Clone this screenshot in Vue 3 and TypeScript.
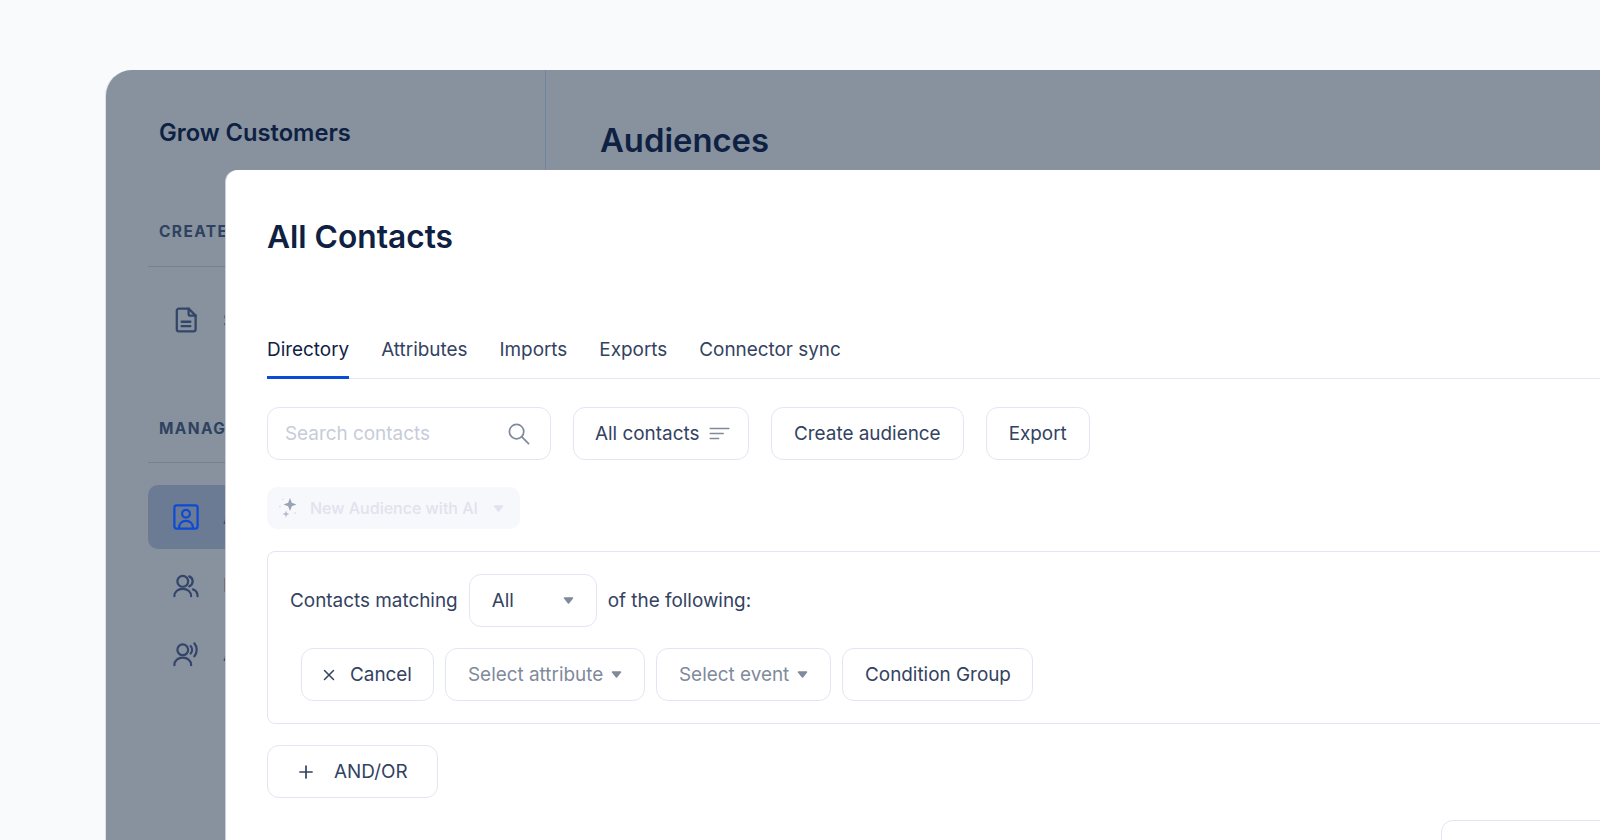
<template>
  <div class="page">
    <div class="window">
      <aside class="sidebar">
        <div class="brand">Grow Customers</div>

        <div class="section-title first">CREATE</div>
        <nav class="nav">
          <div v-for="item in createItems" :key="item.label" class="nav-item">
            <svg class="nav-icon" viewBox="0 0 28 32" fill="none" stroke="currentColor" stroke-width="2.600" stroke-linecap="round" stroke-linejoin="round">
              <path d="M6 3h11l8 8v15.500a2.500 2.500 0 0 1-2.500 2.500h-16.500a2.500 2.500 0 0 1-2.500-2.500v-21a2.500 2.500 0 0 1 2.500-2.500z" />
              <path d="M17 3v6a2 2 0 0 0 2 2h6" />
              <path d="M9 18h10M9 23h10" />
            </svg>
            <span class="nav-label">{{ item.label }}</span>
          </div>
        </nav>

        <div class="section-title second">MANAGE</div>
        <nav class="nav second-nav">
          <div class="nav-item active">
            <svg class="nav-icon" viewBox="0 0 28 28" fill="none" stroke="currentColor" stroke-width="2.400" stroke-linecap="round" stroke-linejoin="round">
              <rect x="1.500" y="1.500" width="25" height="25" rx="2.500" />
              <circle cx="14" cy="10.500" r="4.200" />
              <path d="M6.500 26c0-5 3.200-7.800 7.500-7.800s7.500 2.800 7.500 7.800" />
            </svg>
            <span class="nav-label">Audiences</span>
          </div>
          <div class="nav-item">
            <svg class="nav-icon" viewBox="0 0 28 26" fill="none" stroke="currentColor" stroke-width="2.400" stroke-linecap="round" stroke-linejoin="round">
              <circle cx="10.500" cy="8" r="5.800" />
              <path d="M1.500 24c0-5 4-8 9-8s9 3 9 8" />
              <path d="M17.500 2.600a5.800 5.800 0 0 1 0 10.800" />
              <path d="M21.500 16.600c3 1 5 3.700 5 7.400" />
            </svg>
            <span class="nav-label">People</span>
          </div>
          <div class="nav-item">
            <svg class="nav-icon" viewBox="0 0 28 26" fill="none" stroke="currentColor" stroke-width="2.400" stroke-linecap="round" stroke-linejoin="round">
              <circle cx="10.500" cy="8.500" r="5.800" />
              <path d="M1.500 25c0-5 4-8 9-8s9 3 9 8" />
              <path d="M19 4.500a6 6 0 0 1 0 8" />
              <path d="M23 1.500a11 11 0 0 1 0 14" />
            </svg>
            <span class="nav-label">Audio</span>
          </div>
        </nav>
      </aside>

      <main class="main">
        <h1 class="main-title">Audiences</h1>
      </main>

      <section class="modal">
        <h2 class="modal-title">All Contacts</h2>

        <div class="tabs">
          <div v-for="(tab, i) in tabs" :key="tab" class="tab" :class="{ current: i === 0 }">{{ tab }}</div>
        </div>

        <div class="toolbar">
          <div class="field search">
            <span class="placeholder">Search contacts</span>
            <svg class="search-icon" viewBox="0 0 24 24" fill="none" stroke="#7f8a9b" stroke-width="1.800" stroke-linecap="round">
              <circle cx="10" cy="10" r="7.500" />
              <path d="M15.500 15.500l7 7" />
            </svg>
          </div>
          <button class="btn filter-btn">
            All contacts
            <svg class="lines" viewBox="0 0 22 14" fill="none" stroke="#7f8a9b" stroke-width="1.600" stroke-linecap="round">
              <path d="M1 1.500h20M1 7h14M1 12.500h9" />
            </svg>
          </button>
          <button class="btn">Create audience</button>
          <button class="btn">Export</button>
        </div>

        <div class="ai-btn">
          <svg class="sparkle" viewBox="0 0 20 20">
            <path d="M12 0l1.800 4.700 4.700 1.800-4.700 1.800-1.800 4.700-1.800-4.700-4.700-1.800 4.700-1.800z" fill="#9aa3b5" />
            <path d="M8 12.500l.9 2.600 2.600.9-2.600.9-.9 2.600-.9-2.600-2.600-.9 2.600-.9z" fill="#b4bbca" />
            <circle cx="2" cy="8.500" r="1.100" fill="#dfe3ea" />
            <circle cx="5" cy="1.500" r="1" fill="#e4e7ee" />
            <circle cx="17" cy="15" r="1.100" fill="#dfe3ea" />
          </svg>
          <span>New Audience with AI</span>
          <svg class="caret pale" viewBox="0 0 11 7"><path d="M1.500 1h8L5.500 6z" /></svg>
        </div>

        <div class="rule-box">
          <div class="rule-line">
            <span>Contacts matching</span>
            <div class="btn select-all">All <svg class="caret" viewBox="0 0 11 7"><path d="M1.500 1h8L5.500 6z" /></svg></div>
            <span>of the following:</span>
          </div>
          <div class="rule-actions">
            <button class="btn cancel">
              <svg class="mini" viewBox="0 0 12 12" fill="none" stroke="#33425f" stroke-width="1.500" stroke-linecap="round">
                <path d="M1.500 1.500l9 9M10.500 1.500l-9 9" />
              </svg>
              Cancel
            </button>
            <div class="btn muted select-attr">Select attribute <svg class="caret" viewBox="0 0 11 7"><path d="M1.500 1h8L5.500 6z" /></svg></div>
            <div class="btn muted select-event">Select event <svg class="caret" viewBox="0 0 11 7"><path d="M1.500 1h8L5.500 6z" /></svg></div>
            <button class="btn condition">Condition Group</button>
          </div>
        </div>

        <button class="btn and-or">
          <svg class="plus" viewBox="0 0 14 14" fill="none" stroke="#33425f" stroke-width="1.700" stroke-linecap="round">
            <path d="M7 1v12M1 7h12" />
          </svg>
          AND/OR
        </button>

        <div class="bottom-action">Save audience</div>
      </section>
    </div>
  </div>
</template>

<script setup lang="ts">
const tabs: string[] = ['Directory', 'Attributes', 'Imports', 'Exports', 'Connector sync']
const createItems: { label: string }[] = [{ label: 'Surveys' }]
</script>

<style scoped>
.page {
  width: 1600px;
  height: 840px;
  overflow: hidden;
  background: #f9fafc;
  padding: 70px 0 0 106px;
  box-sizing: border-box;
  font-family: Inter, "Liberation Sans", sans-serif;
}

.window {
  position: relative;
  display: flex;
  width: 1600px;
  height: 900px;
  background: #87929e;
  border-radius: 26px 0 0 0;
  box-shadow: -1px 0 0 #dfe2e8;
  color: #0e2143;
}

.sidebar {
  width: 440px;
  flex: none;
  box-sizing: border-box;
  padding: 49px 0 0 42px;
  border-right: 1.500px solid #7283a0;
}

.brand {
  font-size: 23.700px;
  line-height: 28px;
  font-weight: 600;
  margin: 0 0 0 11px;
}

.section-title {
  font-size: 15.500px;
  line-height: 20px;
  font-weight: 700;
  letter-spacing: 1.400px;
  color: #2f4160;
  padding: 0 0 24px 11px;
  border-bottom: 1px solid #76818f;
}

.section-title.first {
  margin-top: 75px;
}

.section-title.second {
  margin-top: 67px;
  padding-bottom: 23px;
}

.nav {
  display: flex;
  flex-direction: column;
  margin-top: 21px;
  gap: 4.500px;
}

.second-nav {
  margin-top: 22px;
}

.nav-item {
  display: flex;
  align-items: center;
  height: 64px;
  padding-left: 25px;
  border-radius: 10px;
  color: #33466a;
  font-size: 18px;
}

.nav-item.active {
  background: #6b7b94;
  color: #0d4ad6;
}

.nav-icon {
  width: 26px;
  height: 28px;
  flex: none;
}

.nav-label {
  margin-left: 24px;
  color: #33466a;
}

.main {
  flex: 1;
  padding: 50px 0 0 54px;
}

.main-title {
  margin: 0;
  font-size: 32.800px;
  line-height: 40px;
  font-weight: 600;
}

.modal {
  position: absolute;
  left: 120px;
  top: 100px;
  width: 1400px;
  height: 700px;
  box-sizing: border-box;
  padding: 49px 0 0 41px;
  background: #fff;
  border-radius: 12px 0 0 0;
  box-shadow: -1px 0 0 #c9cfdd;
  color: #33425f;
  font-size: 18.900px;
}

.modal-title {
  margin: 0;
  font-size: 31.700px;
  line-height: 36px;
  font-weight: 600;
  color: #0e2143;
}

.tabs {
  display: flex;
  gap: 32px;
  margin-top: 83px;
  border-bottom: 1.500px solid #e4e7f2;
  width: 1400px;
}

.tab {
  line-height: 24px;
  padding-bottom: 14px;
  margin-bottom: -1.500px;
  border-bottom: 3px solid transparent;
  color: #33425f;
}

.tab.current {
  color: #0e2143;
  border-bottom-color: #0a4bd8;
}

.toolbar {
  display: flex;
  gap: 22px;
  margin-top: 28.500px;
}

.btn {
  display: inline-flex;
  align-items: center;
  height: 53px;
  box-sizing: border-box;
  padding: 0 22px;
  background: #fff;
  border: 1.500px solid #e2e6f2;
  border-radius: 12px;
  font: inherit;
  color: #33425f;
  white-space: nowrap;
}

.field {
  display: flex;
  align-items: center;
  justify-content: space-between;
  width: 284px;
  height: 53px;
  box-sizing: border-box;
  padding: 0 20px 0 17px;
  border: 1.500px solid #e2e6f2;
  border-radius: 12px;
}

.placeholder {
  color: #c6ccd9;
}

.search-icon {
  width: 23px;
  height: 23px;
}

.filter-btn {
  gap: 10px;
  width: 176px;
  padding: 0 0 0 21px;
}

.lines {
  width: 21px;
  height: 13px;
}

.ai-btn {
  display: flex;
  align-items: center;
  width: 253px;
  height: 42px;
  box-sizing: border-box;
  margin-top: 27px;
  padding-left: 11px;
  background: #f7f8fb;
  border-radius: 10px;
  font-size: 16px;
  font-weight: 500;
  color: #dfe3ee;
}

.sparkle {
  width: 20px;
  height: 20px;
  margin-right: 12px;
}

.ai-btn .caret {
  margin-left: 15px;
}

.caret {
  width: 11px;
  height: 7px;
  flex: none;
  fill: #7f8a9b;
  stroke: #7f8a9b;
  stroke-width: 1.500;
  stroke-linejoin: round;
}

.caret.pale {
  fill: #dfe3ee;
  stroke: #dfe3ee;
}

.rule-box {
  width: 1400px;
  box-sizing: border-box;
  margin-top: 22px;
  padding: 22px 0 22px 22px;
  border: 1.500px solid #e2e6f2;
  border-radius: 8px;
}

.rule-line {
  display: flex;
  align-items: center;
  gap: 11px;
}

.select-all {
  justify-content: space-between;
  width: 128px;
  padding-right: 22px;
}

.rule-actions {
  display: flex;
  gap: 11px;
  margin: 21px 0 0 11px;
}

.cancel {
  width: 133px;
  gap: 15px;
  padding: 0 0 0 21px;
}

.mini {
  width: 12px;
  height: 12px;
}

.muted {
  color: #7f8a9b;
  justify-content: space-between;
}

.select-attr {
  width: 200px;
}

.select-event {
  width: 175px;
}

.condition {
  width: 191px;
}

.and-or {
  display: flex;
  width: 171px;
  margin-top: 21px;
  gap: 21px;
  padding: 0 0 0 31px;
}

.plus {
  width: 14px;
  height: 14px;
}

.bottom-action {
  position: absolute;
  left: 1215px;
  top: 650px;
  width: 200px;
  height: 53px;
  box-sizing: border-box;
  padding: 17px 0 0 26px;
  border: 1.500px solid #e2e6f2;
  border-radius: 12px;
}
</style>

<style>
html,
body {
  margin: 0;
  overflow: hidden;
}
</style>
